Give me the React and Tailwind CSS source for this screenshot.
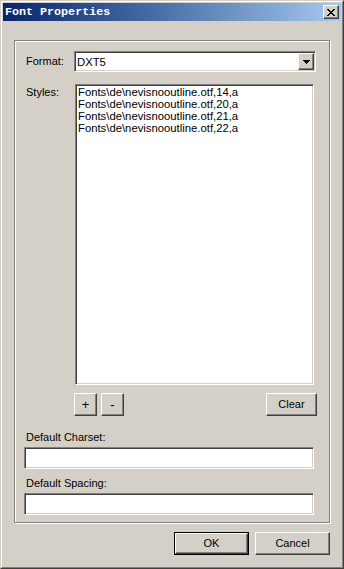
import React from "react";

const raised =
  "border border-t-white border-l-white border-r-[#404040] border-b-[#404040] shadow-[inset_-1px_-1px_0_#808080] bg-[#d4d0c8]";
const sunken =
  "border border-t-[#808080] border-l-[#808080] border-r-white border-b-white shadow-[inset_1px_1px_0_#404040,inset_-1px_-1px_0_#d4d0c8] bg-white";

function CloseGlyph() {
  const rows = [
    [0, 1, 6, 7],
    [1, 2, 5, 6],
    [2, 3, 4, 5],
    [3, 4],
    [2, 3, 4, 5],
    [1, 2, 5, 6],
    [0, 1, 6, 7],
  ];
  return (
    <svg width="8" height="7" viewBox="0 0 8 7" shapeRendering="crispEdges">
      {rows.map((r, y) =>
        r.map((x) => <rect key={y + "-" + x} x={x} y={y} width="1" height="1" fill="#000" />)
      )}
    </svg>
  );
}

function ArrowGlyph() {
  return (
    <svg width="7" height="4" viewBox="0 0 7 4" shapeRendering="crispEdges">
      <rect x="0" y="0" width="7" height="1" fill="#000" />
      <rect x="1" y="1" width="5" height="1" fill="#000" />
      <rect x="2" y="2" width="3" height="1" fill="#000" />
      <rect x="3" y="3" width="1" height="1" fill="#000" />
    </svg>
  );
}

function Btn({ children, className = "" }) {
  return (
    <div className={`${raised} flex items-center justify-center text-[11px] leading-[13px] text-black ${className}`}>
      {children}
    </div>
  );
}

export default function App() {
  const items = [
    "Fonts\\de\\nevisnooutline.otf,14,a",
    "Fonts\\de\\nevisnooutline.otf,20,a",
    "Fonts\\de\\nevisnooutline.otf,21,a",
    "Fonts\\de\\nevisnooutline.otf,22,a",
  ];
  return (
    <div
      className="w-[344px] h-[569px] bg-[#d4d0c8] border border-t-[#d4d0c8] border-l-[#d4d0c8] border-r-[#404040] border-b-[#404040] overflow-hidden"
      style={{ fontFamily: '"Liberation Sans", Arial, sans-serif' }}
    >
      <div className="w-full h-full border border-t-white border-l-white border-r-[#808080] border-b-[#808080] p-px flex flex-col">
        {/* Title bar */}
        <div className="h-[18px] flex items-center bg-gradient-to-r from-[#0a246a] to-[#a6caf0] pl-[2px] pr-[2px]">
          <span
            className="text-white font-bold text-[11.7px] leading-[18px] flex-1"
            style={{ fontFamily: '"Liberation Mono", "Courier New", monospace' }}
          >
            Font Properties
          </span>
          <div className={`${raised} w-[16px] h-[14px] flex items-center justify-center`}>
            <CloseGlyph />
          </div>
        </div>

        {/* Body */}
        <div className="flex-1 flex flex-col">
          <div className="ml-[11px] mt-[19px] w-[316px] h-[483px] border border-[#808080] shadow-[1px_1px_0_#fff,inset_1px_1px_0_#fff] flex flex-col text-[11px] text-black">
            {/* Format row */}
            <div className="mt-[10px] flex items-center">
              <div className="ml-[11px] w-[48px] leading-[13px]">Format:</div>
              <div className={`${sunken} w-[242px] h-[21px] flex items-stretch`}>
                <div className="flex-1 pl-[2px] pt-[1px] leading-[15px] flex items-center text-[11.3px]">DXT5</div>
                <div className="py-px pr-px">
                  <div className={`${raised} w-[16px] h-full flex items-center justify-center`}>
                    <ArrowGlyph />
                  </div>
                </div>
              </div>
            </div>

            {/* Styles row */}
            <div className="mt-[12px] flex items-start">
              <div className="ml-[11px] w-[49px] pt-[2px] leading-[12px]">Styles:</div>
              <div className={`${sunken} w-[239px] h-[301px] pl-[2px] pt-[1px] text-[11.3px]`}>
                {items.map((t) => (
                  <div key={t} className="leading-[12px] whitespace-nowrap">
                    {t}
                  </div>
                ))}
              </div>
            </div>

            {/* Buttons row */}
            <div className="mt-[8px] flex items-center">
              <div className="ml-[59px] flex gap-[4px]">
                <Btn className="w-[23px] h-[23px] text-[13px]">+</Btn>
                <Btn className="w-[23px] h-[23px] text-[13px]">-</Btn>
              </div>
              <div className="flex-1" />
              <Btn className="w-[51px] h-[23px] mr-[12px]">Clear</Btn>
            </div>

            {/* Default Charset */}
            <div className="mt-[15px] ml-[11px] leading-[13px]">Default Charset:</div>
            <div className={`${sunken} mt-[3px] ml-[9px] w-[290px] h-[22px]`} />

            {/* Default Spacing */}
            <div className="mt-[8px] ml-[11px] leading-[13px]">Default Spacing:</div>
            <div className={`${sunken} mt-[3px] ml-[9px] w-[290px] h-[22px]`} />
          </div>

          {/* Dialog buttons */}
          <div className="mt-[9px] mr-[11px] flex justify-end gap-[6px]">
            <div className="border border-black w-[75px] h-[23px]">
              <Btn className="w-full h-full">OK</Btn>
            </div>
            <Btn className="w-[75px] h-[23px]">Cancel</Btn>
          </div>
        </div>
      </div>
    </div>
  );
}
